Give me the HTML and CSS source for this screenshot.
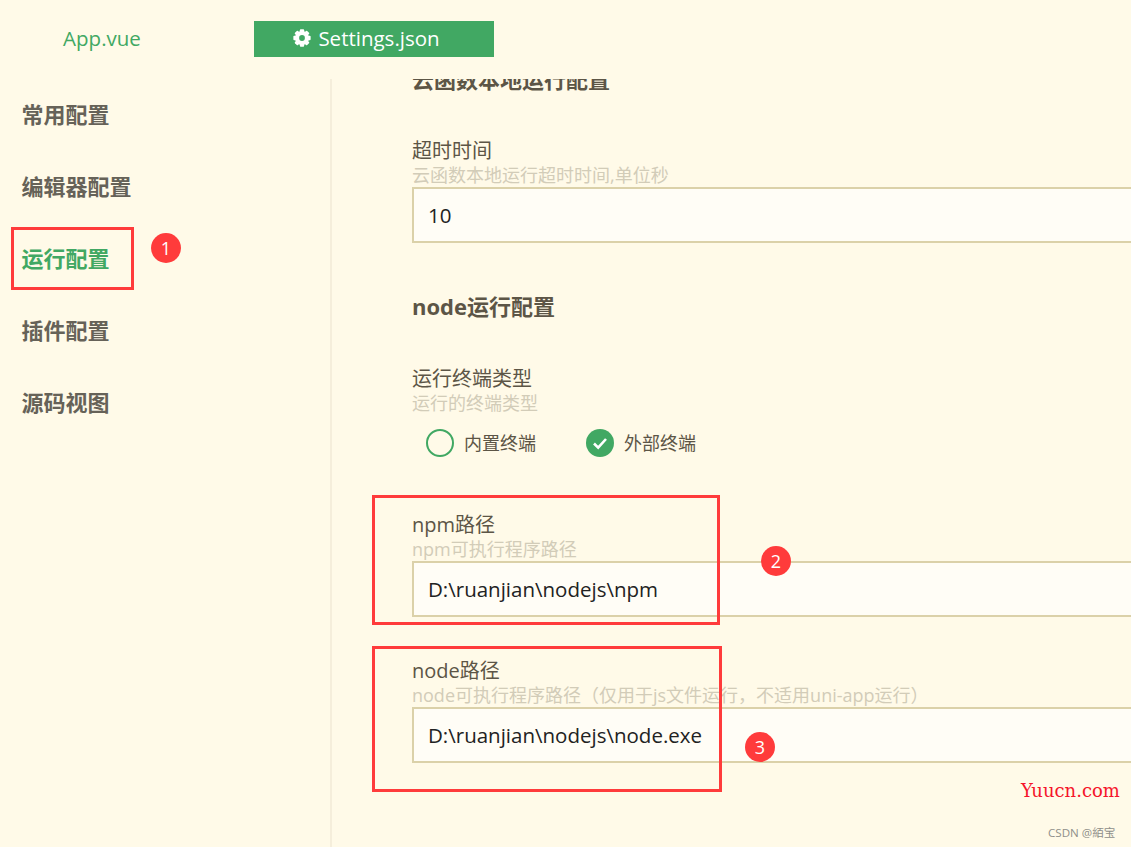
FILE: index.html
```html
<!DOCTYPE html>
<html lang="en">

<head>
    <meta charset="UTF-8" />
    <meta name="viewport" content="width=device-width, initial-scale=1.0" />
    <title>Settings.json</title>
    <link rel="stylesheet" href="styles.css">
</head>

<body>
    <header class="tabs">
        <div class="tab">App.vue</div>
        <div class="tab active">
            <svg class="gear" viewBox="0 0 20 20">
                <g fill="#fff">
                    <rect x="7.6" y="0.4" width="4.8" height="19.2" rx="1" />
                    <rect x="7.6" y="0.4" width="4.8" height="19.2" rx="1" transform="rotate(45 10 10)" />
                    <rect x="7.6" y="0.4" width="4.8" height="19.2" rx="1" transform="rotate(90 10 10)" />
                    <rect x="7.6" y="0.4" width="4.8" height="19.2" rx="1" transform="rotate(135 10 10)" />
                </g>
                <circle cx="10" cy="10" r="6" fill="none" stroke="#fff" stroke-width="3.6" />
                <circle cx="10" cy="10" r="3.2" fill="#41a863" />
            </svg>
            Settings.json
        </div>
    </header>

    <div class="main">
        <aside class="sidebar">
            <a>常用配置</a>
            <a>编辑器配置</a>
            <a class="current">运行配置</a>
            <a>插件配置</a>
            <a>源码视图</a>
        </aside>

        <section class="content">
            <h2 class="first">云函数本地运行配置</h2>

            <div class="field timeout">
                <label>超时时间</label>
                <small>云函数本地运行超时时间,单位秒</small>
                <div class="input">10</div>
            </div>

            <h2>node运行配置</h2>

            <div class="field terminal">
                <label>运行终端类型</label>
                <small>运行的终端类型</small>
                <div class="radios">
                    <div class="radio"><i class="dot"></i><span>内置终端</span></div>
                    <div class="radio"><i class="dot on">
                        <svg viewBox="0 0 28 28"><path d="M8 14.5l4.2 4.2L20 10" fill="none" stroke="#fff" stroke-width="2.6" /></svg>
                    </i><span>外部终端</span></div>
                </div>
            </div>

            <div class="field npm">
                <label>npm路径</label>
                <small>npm可执行程序路径</small>
                <div class="input">D:\ruanjian\nodejs\npm</div>
            </div>

            <div class="field node">
                <label>node路径</label>
                <small>node可执行程序路径（仅用于js文件运行，不适用uni-app运行）</small>
                <div class="input">D:\ruanjian\nodejs\node.exe</div>
            </div>
        </section>
    </div>

    <!-- red marks drawn over the screenshot -->
    <div class="mark box-1"></div>
    <div class="mark box-2"></div>
    <div class="mark box-3"></div>
    <div class="num num-1">1</div>
    <div class="num num-2">2</div>
    <div class="num num-3">3</div>

    <div class="watermark">Yuucn.com</div>
    <div class="credit">CSDN @絔宝</div>
</body>

</html>
```

FILE: styles.css
```css
* {
    box-sizing: border-box;
}

body {
    font-family: "Open Sans", "Noto Sans CJK SC", sans-serif;
    background: #fffae8;
    color: #5c5546;
    margin: 0;
    height: 847px;
    overflow: hidden;
    position: relative;
}

.tabs {
    height: 79px;
    padding-top: 21px;
    display: flex;
}

.tab {
    width: 204px;
    height: 36px;
    line-height: 34px;
    text-align: center;
    font-size: 20.5px;
    color: #41a863;
}

.tab.active {
    width: 240px;
    margin-left: 50px;
    padding: 0 15px 2px 0;
    background: #41a863;
    color: #fff;
    display: flex;
    justify-content: center;
    align-items: center;
    gap: 7px;
}

.gear {
    width: 18px;
    height: 18px;
    margin-top: -1px;
}

.main {
    display: flex;
    height: 768px;
}

.sidebar {
    width: 332px;
    flex-shrink: 0;
    border-right: 2px solid #f5eedb;
}

.sidebar a {
    display: block;
    height: 72px;
    line-height: 70px;
    padding-left: 21.5px;
    font-size: 22px;
    font-weight: bold;
    color: #666258;
}

.sidebar a.current {
    color: #41a863;
}

.content {
    flex: 1;
    overflow: hidden;
    padding-left: 80px;
}

h2 {
    margin: 44px 0 0;
    height: 40px;
    line-height: 38px;
    font-size: 22px;
    font-weight: bold;
}

h2.first {
    margin-top: -19px;
}

.field label,
.field small {
    display: block;
    height: 24px;
    line-height: 24px;
    white-space: nowrap;
}

.field label {
    font-size: 20px;
}

.field small {
    font-size: 18px;
    color: #d2ccb8;
}

.timeout {
    margin-top: 39px;
}

.terminal {
    margin-top: 40px;
}

.npm {
    margin-top: 56px;
}

.node {
    margin-top: 42px;
}

.input {
    width: 800px;
    height: 56px;
    line-height: 52px;
    padding-left: 14px;
    font-size: 20.5px;
    color: #222;
    background: #fffdf6;
    border: 2px solid #dbd1a9;
}

.radios {
    display: flex;
    margin: 14px 0 0 14px;
    height: 28px;
}

.radio {
    width: 160px;
    display: flex;
    align-items: center;
    gap: 10px;
    font-size: 18px;
}

.radio span {
    margin-top: -2px;
}

.dot {
    width: 28px;
    height: 28px;
    border: 2px solid #41a863;
    border-radius: 50%;
}

.dot.on {
    border: 0;
    background: #41a863;
}

.dot svg {
    display: block;
}

.mark {
    position: absolute;
    border: 3px solid #ff3b3b;
}

.box-1 {
    left: 11px;
    top: 227px;
    width: 123px;
    height: 63px;
}

.box-2 {
    left: 372px;
    top: 495px;
    width: 348px;
    height: 130px;
}

.box-3 {
    left: 372px;
    top: 646px;
    width: 350px;
    height: 146px;
}

.num {
    position: absolute;
    width: 30px;
    height: 30px;
    line-height: 30px;
    border-radius: 50%;
    text-align: center;
    font-size: 18px;
    color: #fff;
    background: #ff3b3b;
}

.num-1 {
    left: 151px;
    top: 233px;
}

.num-2 {
    left: 761px;
    top: 546px;
}

.num-3 {
    left: 745px;
    top: 732px;
}

.watermark {
    position: absolute;
    left: 1021px;
    top: 780px;
    font-family: "DejaVu Serif", serif;
    font-size: 18px;
    color: #f5142a;
}

.credit {
    position: absolute;
    left: 1048px;
    top: 824px;
    font-size: 11.6px;
    color: #8f8f8a;
}
```
